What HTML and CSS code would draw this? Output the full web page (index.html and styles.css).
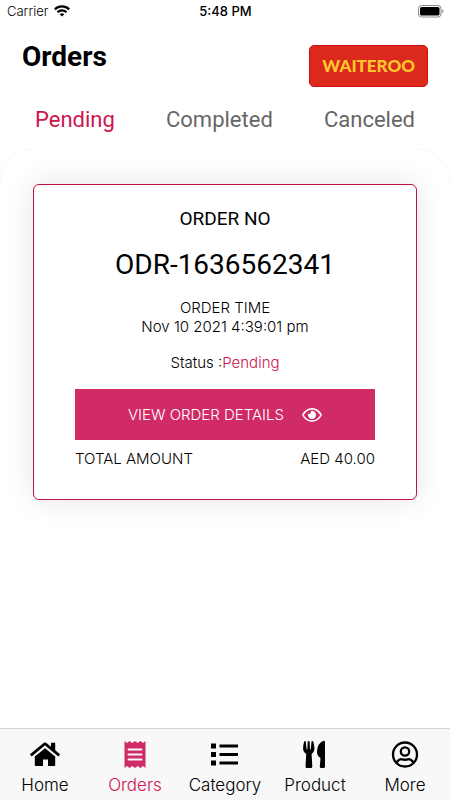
FILE: index.html
```html
<!DOCTYPE html>
<html lang="en">
<head>
<meta charset="utf-8">
<meta name="viewport" content="width=device-width, initial-scale=1">
<title>Orders</title>
<link rel="stylesheet" href="styles.css">
</head>
<body>
<div class="app">
  <div class="status-bar">
    <div class="carrier">
      <span>Carrier</span>
      <svg width="16" height="12" viewBox="0 0 16 12" aria-hidden="true">
        <g fill="none" stroke="#000" stroke-width="2.200">
          <path d="M.8 4.400a10.200 10.200 0 0 1 14.400 0"/>
          <path d="M3.500 7.200a6.400 6.400 0 0 1 9 0"/>
        </g>
        <path d="M8 11.600 5.700 9.300a3.300 3.300 0 0 1 4.600 0z"/>
      </svg>
    </div>
    <time class="clock">5:48 PM</time>
    <svg class="battery" width="26" height="13" viewBox="0 0 26 13" aria-hidden="true">
      <rect x=".5" y=".5" width="22.500" height="11.500" rx="3" fill="none" stroke="#8a8a8a"/>
      <rect x="2" y="2" width="19.500" height="8.500" rx="1.600"/>
      <path d="M24.300 4.300a2.400 2.400 0 0 1 0 4z" fill="#777"/>
    </svg>
  </div>
  <header class="header">
    <h1 class="title">Orders</h1>
    <div class="brand">WAITEROO</div>
  </header>
  <nav class="tabs" aria-label="Order status">
    <button class="tab tab-active" type="button">Pending</button>
    <button class="tab" type="button">Completed</button>
    <button class="tab" type="button">Canceled</button>
  </nav>
  <main class="panel">
    <article class="card">
      <p class="order-label">ORDER NO</p>
      <h2 class="order-number">ODR-1636562341</h2>
      <p>ORDER TIME</p>
      <p>Nov 10 2021 4:39:01 pm</p>
      <p class="state">Status :<span class="accent">Pending</span></p>
      <button class="details" type="button">
        <span>VIEW ORDER DETAILS</span>
        <svg width="20" height="14" viewBox="0 0 20 14" aria-hidden="true">
          <path d="M.9 7C3 3 6.300.9 10 .9S17 3 19.100 7C17 11 13.700 13.100 10 13.100S3 11 .9 7z" fill="none" stroke="#fff" stroke-width="1.600"/>
          <path d="M10 3a4 4 0 1 1-3.800 2.800 2 2 0 0 0 2.600-2.600A4 4 0 0 1 10 3z" fill="#fff"/>
        </svg>
      </button>
      <div class="total"><span>TOTAL AMOUNT</span><span>AED 40.00</span></div>
    </article>
  </main>
  <nav class="bottom-nav" aria-label="Main">
    <a class="nav-item" href="#home">
      <svg width="32" height="28" viewBox="0 0 32 28" aria-hidden="true">
        <path d="M16 8.200 26.200 16.500v8.700q0 .8-.8.8H19v-6.500h-5V26H6.600q-.8 0-.8-.8v-8.700z"/>
        <path d="M1.800 15.400 14.900 4.500q1.100-.9 2.200 0L30.200 15.400" fill="none" stroke="#000" stroke-width="2.800"/>
        <path d="M22 2.800h4.200v9.500L22 8.800z"/>
      </svg>
      <span>Home</span>
    </a>
    <a class="nav-item nav-active" href="#orders" aria-current="page">
      <svg width="32" height="28" viewBox="0 0 32 28" aria-hidden="true">
        <path fill="#d02b67" d="M5.500 1 8 3l2.500-2 2.700 2L16 1l2.700 2 2.700-2L24 3l2.500-2v27L24 26l-2.600 2-2.700-2-2.700 2-2.800-2-2.700 2L8 26l-2.500 2z"/>
        <path d="M9.500 9.500h13M9.500 14.500h13M9.500 19.500h13" stroke="#f8f8f8" stroke-width="2" stroke-linecap="round"/>
      </svg>
      <span>Orders</span>
    </a>
    <a class="nav-item" href="#category">
      <svg width="32" height="28" viewBox="0 0 32 28" aria-hidden="true">
        <path d="M2 3.500h5v5H2zM2 12h5v5H2zM2 20.500h5v5H2zM10.500 4.500H29v3H10.500zM10.500 13H29v3H10.500zM10.500 21.500H29v3H10.500z"/>
      </svg>
      <span>Category</span>
    </a>
    <a class="nav-item" href="#product">
      <svg width="32" height="28" viewBox="0 0 32 28" aria-hidden="true">
        <path d="M5.200 1.500q.9-.9 1.600 0L7.600 9q.5.800.8 0L8.700 1.500q.9-.9 1.900 0l.4 7.500q.4.800.8 0l.7-7.500q.9-.9 1.700 0 1.400 4 1.200 8-.4 3.200-2.800 4.500l.7 12.500q0 1.500-1.500 1.500H8q-1.500 0-1.500-1.500L7.200 14Q4.500 12.600 4.100 9.500 4 5 5.200 1.500z"/>
        <path d="M24.500.8q1.500 0 1.500 1.200v24.500q0 1.500-1.500 1.500h-2.300q-1.400 0-1.400-1.500l.7-8.500q-3.700-2.500-3.500-6.500Q18.600 3 24.500.8z"/>
      </svg>
      <span>Product</span>
    </a>
    <a class="nav-item" href="#more">
      <svg width="32" height="28" viewBox="0 0 32 28" aria-hidden="true">
        <g fill="none" stroke="#000" stroke-width="2.300">
          <circle cx="16" cy="14.500" r="12"/>
          <circle cx="16" cy="11.500" r="4.200"/>
          <path d="M7.500 22.500q3-3.800 5.400-3.200 3.100.9 6.200 0 2.400-.6 5.400 3.200"/>
        </g>
      </svg>
      <span>More</span>
    </a>
  </nav>
</div>
</body>
</html>
```

FILE: styles.css
```css
* { box-sizing: border-box; }

body {
  margin: 0;
  background: #fff;
  color: #000;
  font-family: Inter, "Liberation Sans", sans-serif;
  font-size: 15px;
}

h1, h2, p { margin: 0; }

button {
  border: 0;
  padding: 0;
  background: none;
  font: inherit;
  cursor: pointer;
}

.app {
  display: flex;
  flex-direction: column;
  min-height: 100vh;
}

.status-bar {
  display: grid;
  grid-template-columns: 1fr auto 1fr;
  align-items: center;
  height: 22px;
  padding: 0 6px 0 7px;
  font-size: 13px;
}

.carrier {
  display: flex;
  align-items: center;
  gap: 6px;
  font-weight: 300;
}

.clock { font-weight: 500; }
.battery { justify-self: end; }

.header {
  display: flex;
  justify-content: space-between;
  align-items: flex-start;
  padding: 23px 22px 0;
}

.title {
  font: 700 28px/24px Roboto, sans-serif;
}

.brand {
  padding: 0 12px;
  border: 1px solid #d40d10;
  border-radius: 5px;
  background: #db291d;
  color: #ffc62b;
  font: 900 17px/40px Lato, sans-serif;
}

.tabs {
  display: flex;
  justify-content: space-between;
  padding: 19px 35px 15px;
}

.tab {
  color: #666;
  font: 400 22px/28px Roboto, sans-serif;
}

.tab-active { color: #cd144f; }

.panel {
  flex: 1;
  padding: 34px 33px;
  border: solid transparent;
  border-width: 1px 0 0;
  border-radius: 34px 34px 0 0;
  box-shadow: 0 0 1px #ddd;
}

.card {
  padding: 20px 41px 31px;
  border: 1px solid #c5123f;
  border-radius: 6px;
  background: #fff;
  box-shadow: 0 0 30px rgba(0, 0, 0, 0.11);
  text-align: center;
  font-weight: 300;
  line-height: 19px;
}

.order-label {
  font: 400 19px/28px Roboto, sans-serif;
}

.order-number {
  padding: 16px 0 17px;
  font: 400 28px/32px Roboto, sans-serif;
}

.state { padding: 17px 0; }
.accent { color: #cd144f; }

.details {
  display: flex;
  justify-content: center;
  align-items: center;
  gap: 18px;
  width: 100%;
  height: 51px;
  background: #d02b67;
  color: #fff;
}

.total {
  display: flex;
  justify-content: space-between;
  padding-top: 9px;
}

.bottom-nav {
  display: grid;
  grid-template-columns: repeat(5, 1fr);
  border-top: 1px solid #d5d5d5;
  background: #f8f8f8;
}

.nav-item {
  display: flex;
  flex-direction: column;
  align-items: center;
  gap: 5px;
  padding: 11px 0 3px;
  color: #000;
  font-size: 17px;
  font-weight: 300;
  line-height: 24px;
  text-decoration: none;
}

.nav-active { color: #cd144f; }
```
